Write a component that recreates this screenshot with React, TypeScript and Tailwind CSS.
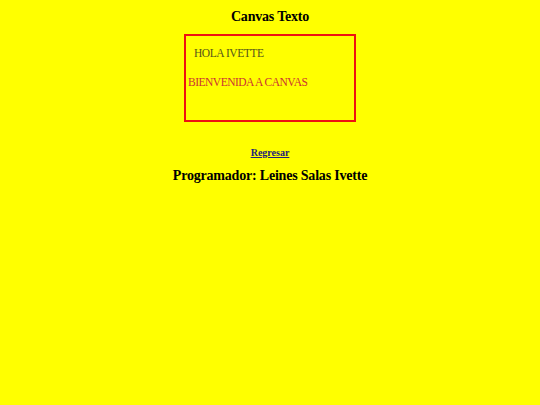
export default function App() {
  return (
    <div className="min-h-[405px] w-full bg-[#ffff00] font-['Liberation_Serif',serif] text-black">
      <div className="flex flex-col items-center pt-[8px]">
        <h3 className="text-[14px] font-bold leading-[17px] tracking-[-0.2px]">Canvas Texto</h3>
        <div className="mt-[9px] flex h-[88px] w-[172px] flex-col border-2 border-[#ee1111]">
          <p className="ml-[8px] mt-[10px] text-[11.5px] leading-[14px] tracking-[-0.45px] text-[#55551a]">HOLA IVETTE</p>
          <p className="ml-[2px] mt-[15px] text-[11.5px] leading-[14px] tracking-[-0.5px] text-[#cc3333]">BIENVENIDA A CANVAS</p>
        </div>
        <a href="#" className="mt-[25px] text-[10px] font-bold leading-[12px] text-[#22227a] underline">
          Regresar
        </a>
        <h3 className="mt-[8px] text-[14px] font-bold leading-[17px] tracking-[-0.2px]">Programador: Leines Salas Ivette</h3>
      </div>
    </div>
  );
}
